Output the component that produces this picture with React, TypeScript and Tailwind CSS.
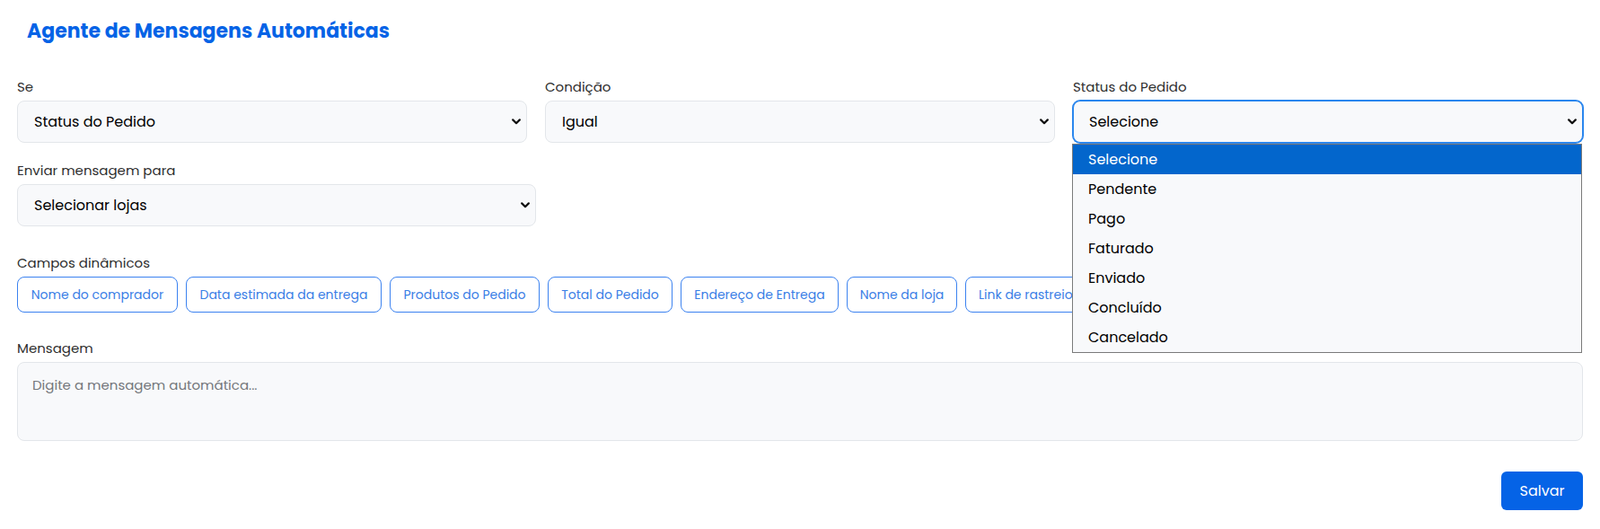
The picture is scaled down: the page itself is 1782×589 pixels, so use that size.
import { useState } from 'react';

const chips = [
  { label: 'Nome do comprador', w: 'w-[179px]' },
  { label: 'Data estimada da entrega', w: 'w-[218px]' },
  { label: 'Produtos do Pedido', w: 'w-[167px]' },
  { label: 'Total do Pedido', w: 'w-[139px]' },
  { label: 'Endereço de Entrega', w: 'w-[176px]' },
  { label: 'Nome da loja', w: 'w-[123px]' },
  { label: 'Link de rastreio', w: 'px-[14px]' },
];

const statusOptions = ['Selecione', 'Pendente', 'Pago', 'Faturado', 'Enviado', 'Concluído', 'Cancelado'];

function Chevron() {
  return (
    <svg width="10" height="7" viewBox="0 0 10 7" fill="none" aria-hidden="true">
      <path d="M1.2 1.4 5 5.2l3.8-3.8" stroke="#111" strokeWidth="2.2" strokeLinecap="round" strokeLinejoin="round" />
    </svg>
  );
}

function FakeSelect({ value, focused = false }: { value: string; focused?: boolean }) {
  return (
    <div
      className={
        focused
          ? 'h-[47px] flex items-center justify-between pl-[17px] pr-[6px] rounded-lg border border-[#2a86ee] ring-1 ring-[#2a86ee] bg-[#f8f9fb] text-base text-black'
          : 'h-[47px] flex items-center justify-between pl-[18px] pr-[6px] rounded-lg border border-[#e3e6ea] bg-[#f8f9fb] text-base text-black'
      }
    >
      <span>{value}</span>
      <Chevron />
    </div>
  );
}

function Label({ children }: { children: React.ReactNode }) {
  return <div className="text-[15px] leading-[22px] text-[#2f2f2f] mb-1">{children}</div>;
}

export default function App() {
  const [highlight] = useState(0);

  return (
    <div className="min-h-[589px] bg-white font-['Poppins','Inter',sans-serif] px-[19px]">
      <h1 className="pt-[19px] pl-[11px] text-[22px] leading-8 font-bold text-[#0563e6]">
        Agente de Mensagens Automáticas
      </h1>

      <div className="grid grid-cols-3 gap-x-5 mt-[35px]">
        <div>
          <Label>Se</Label>
          <FakeSelect value="Status do Pedido" />
        </div>
        <div>
          <Label>Condição</Label>
          <FakeSelect value="Igual" />
        </div>
        <div className="relative">
          <Label>Status do Pedido</Label>
          <FakeSelect value="Selecione" focused />
          <div className="absolute z-10 left-[-1px] right-[1px] top-[74px] border border-[#7a7a7a] bg-[#f8f9fb]">
            {statusOptions.map((opt, i) => (
              <div
                key={opt}
                className={
                  i === highlight
                    ? 'h-[33px] flex items-center pl-[17px] text-base bg-[#0366cc] text-white'
                    : 'h-[33px] flex items-center pl-[17px] text-base text-black'
                }
              >
                {opt}
              </div>
            ))}
          </div>
        </div>
      </div>

      <div className="mt-[20px] w-[578px]">
        <Label>Enviar mensagem para</Label>
        <FakeSelect value="Selecionar lojas" />
      </div>

      <div className="mt-[30px]">
        <Label>Campos dinâmicos</Label>
        <div className="flex gap-[9px]">
          {chips.map((c) => (
            <button
              key={c.label}
              className={`${c.w} h-[40px] shrink-0 rounded-lg border border-[#3b82f0] text-[14px] text-[#3a7ee6] bg-white whitespace-nowrap overflow-hidden`}
            >
              {c.label}
            </button>
          ))}
        </div>
      </div>

      <div className="mt-[29px]">
        <Label>Mensagem</Label>
        <textarea
          className="block w-full h-[88px] rounded-lg border border-[#e3e6ea] bg-[#f8f9fb] px-4 py-[13px] text-[15px] leading-6 resize-none outline-none placeholder:text-[#74777c]"
          placeholder="Digite a mensagem automática..."
        />
      </div>

      <div className="flex justify-end mt-[34px]">
        <button className="w-[91px] h-[43px] rounded-md bg-[#0563e6] text-white text-base">Salvar</button>
      </div>
    </div>
  );
}
